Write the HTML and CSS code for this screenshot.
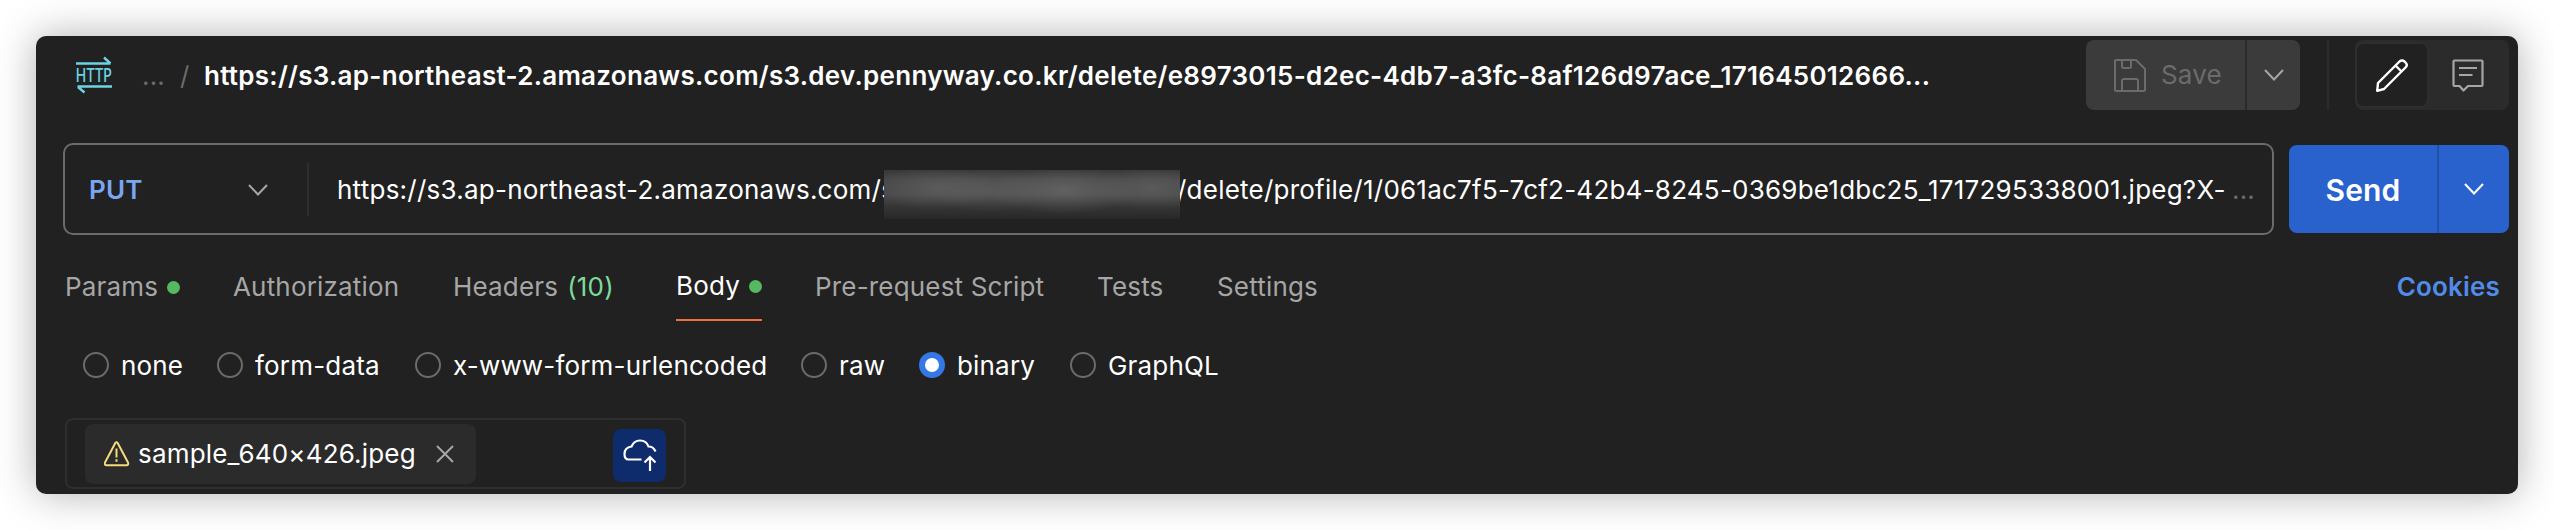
FILE: index.html
```html
<!DOCTYPE html>
<html lang="en">
<head>
<meta charset="utf-8">
<title>Request</title>
<link rel="stylesheet" href="styles.css">
</head>
<body>
<main class="window">
  <header class="header">
    <svg class="http-icon" width="36" height="38" viewBox="0 0 36 38" fill="none" stroke="#6bd3e3" stroke-width="2.4">
      <path d="M0 7.500H34.500M28 1.500L34.500 7.500M36 30.500H1.500M2 31L8.500 36.500"/>
      <text class="http-label" x="-0.5" y="26.300" textLength="36.500" lengthAdjust="spacingAndGlyphs">HTTP</text>
    </svg>
    <span class="crumb-more">...</span>
    <span class="crumb-slash">/</span>
    <h1 class="title">https://s3.ap-northeast-2.amazonaws.com/s3.dev.pennyway.co.kr/delete/e8973015-d2ec-4db7-a3fc-8af126d97ace_171645012666...</h1>
    <div class="save">
      <div class="save-main">
        <svg width="32" height="33" viewBox="0 0 32 33" fill="none" stroke="#6b6b6b" stroke-width="2" stroke-linejoin="round">
          <path d="M2 1H22L31 10V30.500Q31 32 29.500 32H2.500Q1 32 1 30.500V2Q1 1 2 1Z"/>
          <path d="M8 1V7.500Q8 9 9.500 9H15.500Q17 9 17 7.500V1M8 32V22Q8 20 10 20H22Q24 20 24 22V32"/>
        </svg>
        <span>Save</span>
      </div>
      <div class="save-more">
        <svg width="20" height="12" viewBox="0 0 20 12" fill="none" stroke="#a6a6a6" stroke-width="2"><path d="M1 1L10 10.500L19 1"/></svg>
      </div>
    </div>
    <div class="header-divider"></div>
    <div class="toggle">
      <div class="toggle-active">
        <svg width="32" height="33" viewBox="0 0 32 33" fill="none" stroke="#fff" stroke-width="2.400" stroke-linejoin="round">
          <path d="M2 24L23.500 2.500Q26 0.300 28.500 2.500L29.500 3.500Q32 6 29.500 8.500L8 30L1.200 31.800ZM19.500 6.500L25.500 12.500"/>
        </svg>
      </div>
      <svg width="32" height="33" viewBox="0 0 32 33" fill="none" stroke="#a6a6a6" stroke-width="2.200" stroke-linejoin="round">
        <path d="M2.500 1.500H29.500Q30.500 1.500 30.500 2.500V26Q30.500 27 29.500 27H16L11.500 31.500L7.500 27H2.500Q1.500 27 1.500 26V2.500Q1.500 1.500 2.500 1.500ZM7 9H25M7 16H20.500"/>
      </svg>
    </div>
  </header>

  <section class="request">
    <div class="url-box">
      <div class="method">
        <span>PUT</span>
        <svg width="20" height="12" viewBox="0 0 20 12" fill="none" stroke="#a6a6a6" stroke-width="2"><path d="M1 1L10 10.500L19 1"/></svg>
      </div>
      <div class="url"><span class="url-start">https://s3.ap-northeast-2.amazonaws.com/s</span><span class="redacted"></span><span class="url-end">/delete/profile/1/061ac7f5-7cf2-42b4-8245-0369be1dbc25_1717295338001.jpeg?X-</span><span class="url-more">...</span></div>
    </div>
    <div class="send">
      <div class="send-main">Send</div>
      <div class="send-more">
        <svg width="20" height="12" viewBox="0 0 20 12" fill="none" stroke="#fff" stroke-width="2"><path d="M1 1L10 10.500L19 1"/></svg>
      </div>
    </div>
  </section>

  <nav class="tabs">
    <span class="tab params">Params<i class="dot"></i></span>
    <span class="tab auth">Authorization</span>
    <span class="tab headers">Headers <b class="count">(10)</b></span>
    <span class="tab active">Body<i class="dot"></i></span>
    <span class="tab script">Pre-request Script</span>
    <span class="tab tests">Tests</span>
    <span class="tab">Settings</span>
    <a class="cookies">Cookies</a>
  </nav>

  <div class="modes">
    <span class="mode none"><i class="radio"></i><span>none</span></span>
    <span class="mode form"><i class="radio"></i><span>form-data</span></span>
    <span class="mode encoded"><i class="radio"></i><span>x-www-form-urlencoded</span></span>
    <span class="mode raw"><i class="radio"></i><span>raw</span></span>
    <span class="mode binary"><i class="radio checked"></i><span>binary</span></span>
    <span class="mode"><i class="radio"></i><span>GraphQL</span></span>
  </div>

  <div class="file-box">
    <div class="chip">
      <svg class="warn" width="26" height="26" viewBox="0 0 26 26" fill="none" stroke="#f5dc7a" stroke-width="2" stroke-linejoin="round">
        <path d="M11.200 2.200Q12.500 0.500 13.800 2.200L24 21.500Q24.800 24 22.500 24.300H2.500Q0.200 24 1 21.500ZM12.500 7.500V16.500M12.500 18.300V20.700"/>
      </svg>
      <span class="file-name">sample_640×426.jpeg</span>
      <svg width="18" height="18" viewBox="0 0 18 18" fill="none" stroke="#a6a6a6" stroke-width="2"><path d="M1 1L17 17M17 1L1 17"/></svg>
    </div>
    <div class="upload">
      <svg width="34" height="33" viewBox="0 0 34 33" fill="none" stroke="#fff" stroke-width="2.200">
        <path d="M18.500 20.500H5.500Q1.500 20.500 1.500 15Q1.500 8.500 8.500 7.500Q11 1.500 17 1.500Q23.500 1.500 25.500 7.500Q30.500 7.500 32.500 12.500M27 32V18M21.500 23.500L27 18L32.500 23.500"/>
      </svg>
    </div>
  </div>
</main>
</body>
</html>
```
FILE: styles.css
```css
* { box-sizing: border-box; }
body {
  margin: 0;
  padding: 36px;
  height: 530px;
  overflow: hidden;
  background: #fff;
  font-family: Inter, "Liberation Sans", sans-serif;
  font-size: 26px;
  line-height: 32px;
  letter-spacing: .18px;
  color: #fff;
}
svg { flex: none; display: block; }
.window {
  width: 2482px;
  height: 458px;
  padding: 4px 9px 0 27px;
  border-radius: 10px;
  background: #212121;
  box-shadow: 0 0 40px rgba(0, 0, 0, .31);
  white-space: nowrap;
}
.header { display: flex; align-items: center; height: 70px; padding-left: 13px; }
.http-icon { overflow: visible; }
.http-label {
  font: 500 20px "Noto Sans", sans-serif;
  letter-spacing: 0;
  fill: #6bd3e3;
  stroke: none;
}
.crumb-more { width: 38px; margin-left: 30px; padding-top: 1px; color: #6b6b6b; }
.crumb-slash { width: 24px; padding-top: 1px; color: #6b6b6b; }
.title { flex: 1; margin: 0; padding-top: 1px; font-size: 26px; font-weight: 600; letter-spacing: .28px; }
.save {
  display: flex;
  width: 214px;
  height: 70px;
  border-radius: 8px;
  background: #3b3b3b;
  color: #6b6b6b;
}
.save-main { display: flex; align-items: center; gap: 15px; width: 159px; padding-left: 28px; }
.save-more { flex: 1; display: flex; align-items: center; justify-content: center; border-left: 2px solid #2b2b2b; }
.header-divider { width: 2px; height: 70px; margin: 0 26px 0 27px; background: #2b2b2b; }
.toggle { display: flex; align-items: center; gap: 23px; width: 154px; height: 70px; border-radius: 8px; background: #2b2b2b; }
.toggle-active {
  display: flex;
  align-items: center;
  justify-content: center;
  width: 74px;
  height: 66px;
  border: 2px solid #2e2e2e;
  border-radius: 8px;
  background: #212121;
}
.request { display: flex; align-items: center; justify-content: space-between; margin-top: 33px; }
.url-box {
  display: flex;
  align-items: center;
  width: 2211px;
  height: 92px;
  border: 2px solid #6b6b6b;
  border-radius: 10px;
}
.method {
  display: flex;
  align-items: center;
  justify-content: space-between;
  width: 244px;
  height: 53px;
  padding: 1px 39px 0 24px;
  border-right: 2px solid #2e2e2e;
  color: #7aa5f0;
  font-weight: 600;
}
.url { display: flex; align-items: center; padding: 1px 0 0 28px; }
.url-start { width: 547px; letter-spacing: .24px; }
/* Opaque mask drawn over the ends of the neighbouring text */
.redacted {
  z-index: 1;
  width: 296px;
  height: 49px;
  margin: 10px -3px 0 0;
  background:
    radial-gradient(ellipse 60px 22px at 52px 18px, rgba(120, 120, 120, .35), transparent),
    radial-gradient(ellipse 60px 22px at 105px 20px, rgba(120, 120, 120, .3), transparent),
    radial-gradient(ellipse 75px 24px at 180px 20px, rgba(125, 125, 125, .45), transparent),
    radial-gradient(ellipse 60px 22px at 268px 18px, rgba(120, 120, 120, .35), transparent),
    linear-gradient(#383838, #484848 20%, #4a4a4a 50%, #353535 75%, #282828);
}
.url-end { width: 1055px; letter-spacing: .23px; }
.url-more { color: #6b6b6b; }
.send { display: flex; width: 220px; height: 88px; border-radius: 8px; background: #2962cc; }
.send-main { width: 148px; padding-top: 1px; font-size: 30px; font-weight: 600; line-height: 88px; text-align: center; }
.send-more { flex: 1; display: flex; align-items: center; justify-content: center; border-left: 2px solid #2251a8; }
.tabs { display: flex; height: 50px; margin: 36px 9px 0 2px; color: #a6a6a6; }
.tab { display: flex; align-items: center; height: 32px; }
.params { width: 168px; }
.auth { width: 220px; }
.headers { width: 223px; gap: 9px; }
.count { font-weight: 400; color: #7ed99b; }
.dot { width: 13px; height: 13px; margin-left: 9px; border-radius: 50%; background: #55b95f; }
.active {
  width: 86px;
  height: 50px;
  padding-bottom: 18px;
  margin-right: 53px;
  justify-content: space-between;
  border-bottom: 2px solid #f2703f;
  color: #fff;
}
.script { width: 282px; }
.tests { width: 120px; }
.cookies { margin-left: auto; font-weight: 600; color: #528be8; }
.modes { display: flex; align-items: center; height: 34px; margin: 27px 0 0 20px; }
.mode { display: flex; align-items: center; gap: 12px; height: 34px; }
.mode span { padding-top: 2px; }
.radio { width: 26px; height: 26px; border: 2px solid #6b6b6b; border-radius: 50%; }
.checked { border: 6px solid #3578e5; background: #fff; }
.none { width: 134px; }
.form { width: 198px; }
.encoded { width: 386px; }
.raw { width: 118px; }
.binary { width: 151px; }
.file-box {
  display: flex;
  align-items: center;
  justify-content: space-between;
  width: 621px;
  height: 71px;
  margin: 36px 0 0 2px;
  padding: 0 18px;
  border: 2px solid #2e2e2e;
  border-radius: 8px;
}
.chip { display: flex; align-items: center; width: 391px; height: 60px; padding-left: 19px; border-radius: 8px; background: #2b2b2b; }
.file-name { width: 298px; margin-left: 8px; }
.upload {
  display: flex;
  align-items: center;
  justify-content: center;
  width: 53px;
  height: 53px;
  margin-top: 4px;
  border-radius: 8px;
  background: #0e2b6c;
}
```
